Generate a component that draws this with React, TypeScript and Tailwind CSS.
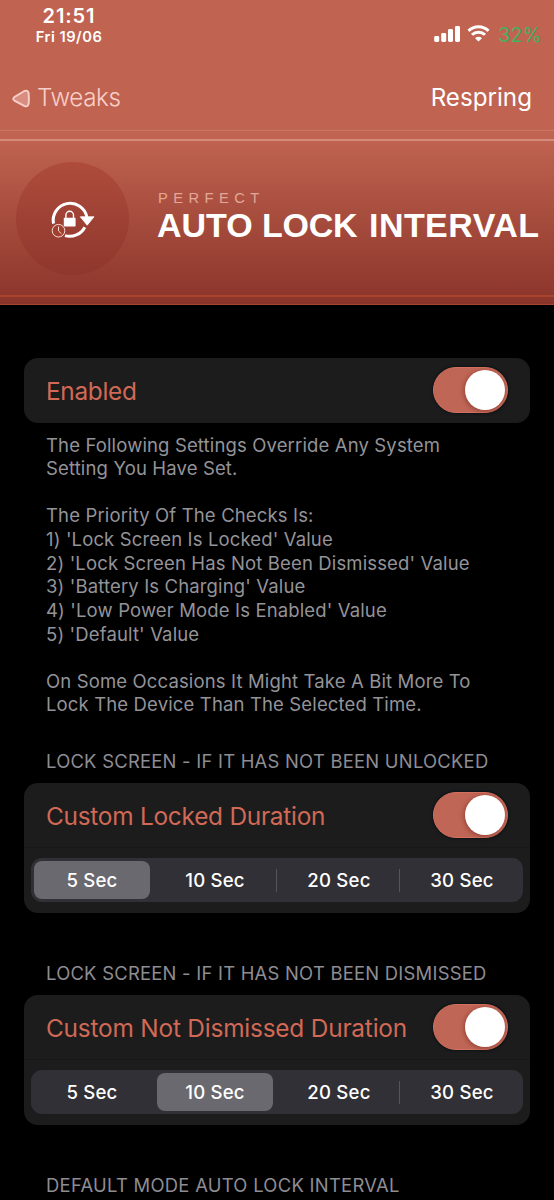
const segments = ["5 Sec", "10 Sec", "20 Sec", "30 Sec"];

const notes = [
  "The Following Settings Override Any System",
  "Setting You Have Set.",
  "",
  "The Priority Of The Checks Is:",
  "1) 'Lock Screen Is Locked' Value",
  "2) 'Lock Screen Has Not Been Dismissed' Value",
  "3) 'Battery Is Charging' Value",
  "4) 'Low Power Mode Is Enabled' Value",
  "5) 'Default' Value",
  "",
  "On Some Occasions It Might Take A Bit More To",
  "Lock The Device Than The Selected Time.",
];

function Toggle() {
  return (
    <div className="flex h-[46px] w-[75px] shrink-0 items-center justify-end rounded-full border border-[#d4705e] bg-[#c06656] pr-[2px] shadow-[0_0_2px_1px_#0c1418]">
      <div className="size-[40px] rounded-full bg-white shadow-[-1px_1px_5px_rgba(90,20,10,0.45)]" />
    </div>
  );
}

function ToggleRow({ label, spacing, divided }: { label: string; spacing: string; divided?: boolean }) {
  return (
    <div
      className={`flex h-[65px] shrink-0 items-center justify-between border-b pr-[22px] pl-[22px] ${
        divided ? "border-[#17171a]" : "border-transparent"
      }`}
    >
      <span className={`pt-[3px] text-[24.4px] whitespace-nowrap text-[#d16956] ${spacing}`}>{label}</span>
      <Toggle />
    </div>
  );
}

function Segmented({ selected }: { selected: number }) {
  return (
    <div className="mx-[7px] mt-[10px] grid h-[44px] grid-cols-4 rounded-[11px] bg-[#313036]">
      {segments.map((label, i) => (
        <div key={label} className="relative flex py-[3px] pr-[4px] pl-[3px]">
          <div
            className={`flex flex-1 items-center justify-center rounded-[8px] pt-[2px] text-[18.6px] font-medium tracking-[0.2px] text-white ${
              i > 1 ? "pl-[2px]" : ""
            } ${i === selected ? "bg-[#6a696f]" : ""}`}
          >
            {label}
          </div>
          {i < 3 && i !== selected && i + 1 !== selected && (
            <div className="absolute top-[11px] right-0 h-[23px] w-px bg-[#55545b]" />
          )}
        </div>
      ))}
    </div>
  );
}

function SectionTitle({ children, spacing }: { children: string; spacing: string }) {
  return (
    <h2 className={`h-6 pl-[46px] text-[18.4px] leading-6 font-normal whitespace-nowrap text-[#8e8d93] ${spacing}`}>
      {children}
    </h2>
  );
}

function AutoLockIcon() {
  return (
    <svg width="48" height="44" viewBox="48 196 48 44" fill="none">
      <path d="M53.5 223.6A16.6 16.6 0 1 1 86.9 217" stroke="#fff" strokeWidth="3" />
      <path d="M84.8 227.2A17 17 0 0 1 65 235.6" stroke="#fff" strokeWidth="3" />
      <path d="M80.3 216.8H94L87.2 225.2Z" fill="#fff" stroke="#fff" strokeWidth="0.8" strokeLinejoin="round" />
      <path d="M65.9 218.5v-3.4a3.8 3.8 0 0 1 7.6 0v3.4" stroke="#fff" strokeWidth="1.4" />
      <rect x="63.8" y="217.8" width="11.8" height="8.7" rx="0.8" fill="#fff" />
      <circle cx="58.5" cy="230.7" r="6.3" fill="#a1402f" stroke="#f5dcd6" strokeWidth="1" />
      <path d="M58.5 226.5v4.4l3 2.9" stroke="#f5dcd6" strokeWidth="1" />
    </svg>
  );
}

export default function App() {
  return (
    <div className="flex h-[1200px] w-[554px] flex-col overflow-hidden bg-black font-['Inter',sans-serif]">
      <header className="flex h-[130px] shrink-0 flex-col bg-[#c06350]">
        <div className="flex h-[52px] shrink-0 justify-between">
          <div className="flex w-[138px] flex-col items-center pt-[6px] font-semibold text-white">
            <span className="text-[20px] leading-5 tracking-[0.9px]">21:51</span>
            <span className="mt-[3px] text-[14.7px] leading-4 tracking-[0.5px]">Fri 19/06</span>
          </div>
          <div className="flex items-start pr-[12px] pt-[24px]">
            <svg width="27" height="18" viewBox="0 0 27 18" fill="#fff">
              <rect x="0.2" y="12" width="5" height="6" rx="1.4" />
              <rect x="7.2" y="9" width="5" height="9" rx="1.4" />
              <rect x="14" y="5" width="5" height="13" rx="1.4" />
              <rect x="21" y="2" width="5" height="16" rx="1.4" />
            </svg>
            <svg width="23" height="18" viewBox="0 0 23 18" className="ml-[6px]" fill="none" stroke="#fff" strokeWidth="3">
              <path d="M1.5 6.9a14.2 14.2 0 0 1 20 0" />
              <path d="M5 10.8a9.3 9.3 0 0 1 13 0" />
              <path d="M11.5 17.6l-3.4-3.4a4.8 4.8 0 0 1 6.8 0z" fill="#fff" stroke="none" />
            </svg>
            <span className="ml-[8px] text-[19.4px] leading-[22px] tracking-[0.3px] text-[#42b265]">32%</span>
          </div>
        </div>
        <div className="mt-[10px] flex h-[72px] shrink-0 items-center justify-between pr-[22px] pl-[12px] text-[24.2px]">
          <div className="flex items-center text-[#f8cfc8]">
            <svg width="19" height="20" viewBox="0 0 19 20" className="mt-[3px]">
              <path
                d="M2.4 8 12 2.2c2.4-1.3 4.4-.2 4.6 2 .4 3.8.4 7.4 0 10.8-.3 2.2-2.2 3-4.4 1.9L2.4 11.6C.9 10.5.9 9 2.4 8z"
                fill="#d98d80"
                stroke="#f9cfc9"
                strokeWidth="1.9"
              />
            </svg>
            <span className="ml-[6px] font-light tracking-[-0.4px]">Tweaks</span>
          </div>
          <span className="text-white">Respring</span>
        </div>
      </header>

      <section className="flex h-[175px] shrink-0 flex-col border-t border-b border-t-[#cb7665] border-b-[#a8432e] bg-linear-to-b from-[#c06350] from-5% to-[#8b342a]">
        <div className="mt-[8px] flex h-[158px] items-center border-t-2 border-b-2 border-t-[#d58b7c] border-b-[#a9452f]">
          <div className="ml-[15.5px] flex size-[113px] shrink-0 items-center justify-center rounded-full bg-linear-to-b from-[#ae4c3c] to-[#8f372d]">
            <AutoLockIcon />
          </div>
          <div className="ml-[28.5px] flex flex-col whitespace-nowrap font-['Liberation_Sans',sans-serif]">
            <span className="-mt-[3px] h-[16px] pl-px text-[14.7px] leading-[14px] tracking-[5.45px] text-[#e3a798]">
              PERFECT
            </span>
            <div className="flex h-[36px] text-[34px] leading-[36px] font-bold text-white">
              <span className="w-[105px]">AUTO</span>
              <span className="w-[107px] tracking-[-0.25px]">LOCK</span>
              <span className="tracking-[0.45px]">INTERVAL</span>
            </div>
          </div>
        </div>
      </section>

      <main className="flex flex-col pt-[52.5px]">
        <div className="mx-[24px] rounded-[14px] bg-[#1c1c1c]">
          <ToggleRow label="Enabled" spacing="tracking-[-0.3px]" />
        </div>
        <div className="mt-[11px] pl-[46px] text-[18.5px] leading-[23.64px] tracking-[0.14px] whitespace-nowrap text-[#949398]">
          {notes.map((line, i) => (
            <p key={i} className="h-[23.64px]">
              {line}
            </p>
          ))}
        </div>

        <div className="mt-[31.8px]">
          <SectionTitle spacing="tracking-[0.25px]">LOCK SCREEN - IF IT HAS NOT BEEN UNLOCKED</SectionTitle>
          <div className="mx-[24px] mt-[10px] h-[130px] rounded-[14px] bg-[#1c1c1c]">
            <ToggleRow divided label="Custom Locked Duration" spacing="tracking-[-0.25px]" />
            <Segmented selected={0} />
          </div>
        </div>

        <div className="mt-[48px]">
          <SectionTitle spacing="tracking-[0.25px]">LOCK SCREEN - IF IT HAS NOT BEEN DISMISSED</SectionTitle>
          <div className="mx-[24px] mt-[10px] h-[130px] rounded-[14px] bg-[#1c1c1c]">
            <ToggleRow divided label="Custom Not Dismissed Duration" spacing="tracking-[-0.2px]" />
            <Segmented selected={1} />
          </div>
        </div>

        <div className="mt-[48px]">
          <SectionTitle spacing="tracking-[0.29px]">DEFAULT MODE AUTO LOCK INTERVAL</SectionTitle>
        </div>
      </main>
    </div>
  );
}
